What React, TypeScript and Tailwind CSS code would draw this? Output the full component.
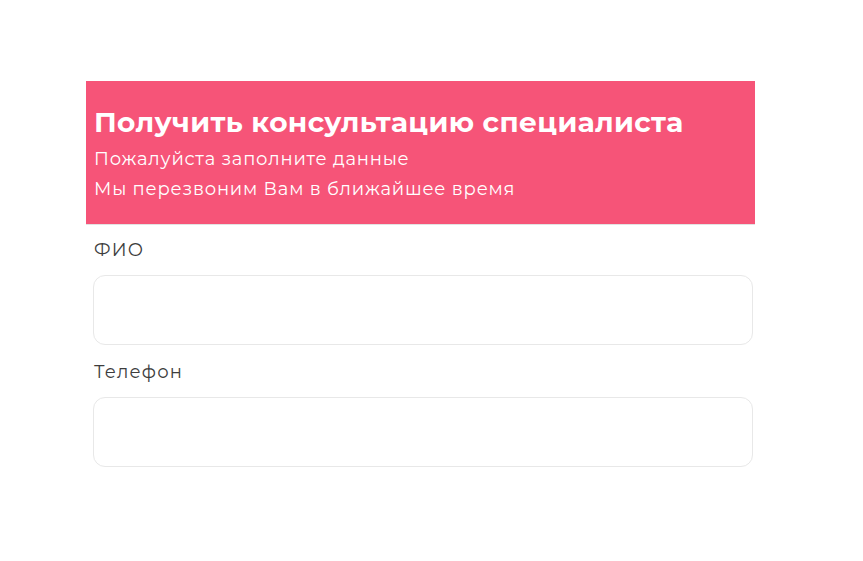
import React from "react";

export default function App() {
  return (
    <div className="min-h-[561px] w-[863px] bg-white pt-[81px]" style={{ fontFamily: '"Montserrat", "Open Sans", "Noto Sans", sans-serif' }}>
      <div className="ml-[86px] w-[669px]">
        <div className="h-[143px] bg-[#f65478] pl-[8px] pt-[24px] text-white shadow-[0_1px_0_#e2e2e2]">
          <div className="text-[28px] font-bold leading-[34px] tracking-[0.35px]">Получить консультацию специалиста</div>
          <div className="mt-[5px] text-[18px] leading-[30px] tracking-[0.8px]">Пожалуйста заполните данные</div>
          <div className="text-[18px] leading-[30px] tracking-[0.8px]">Мы перезвоним Вам в ближайшее время</div>
        </div>
        <div className="pt-[14px]">
          <div className="pl-[8px] text-[18px] font-normal leading-[24px] tracking-[1.2px] text-[#3d3d3d]">ФИО</div>
          <div className="ml-[7px] mr-[2px] mt-[13px] h-[70px] rounded-[12px] border border-[#e8e8e8]" />
          <div className="mt-[15px] pl-[8px] text-[18px] font-normal leading-[24px] tracking-[1.2px] text-[#3d3d3d]">Телефон</div>
          <div className="ml-[7px] mr-[2px] mt-[13px] h-[70px] rounded-[12px] border border-[#e8e8e8]" />
        </div>
      </div>
    </div>
  );
}
